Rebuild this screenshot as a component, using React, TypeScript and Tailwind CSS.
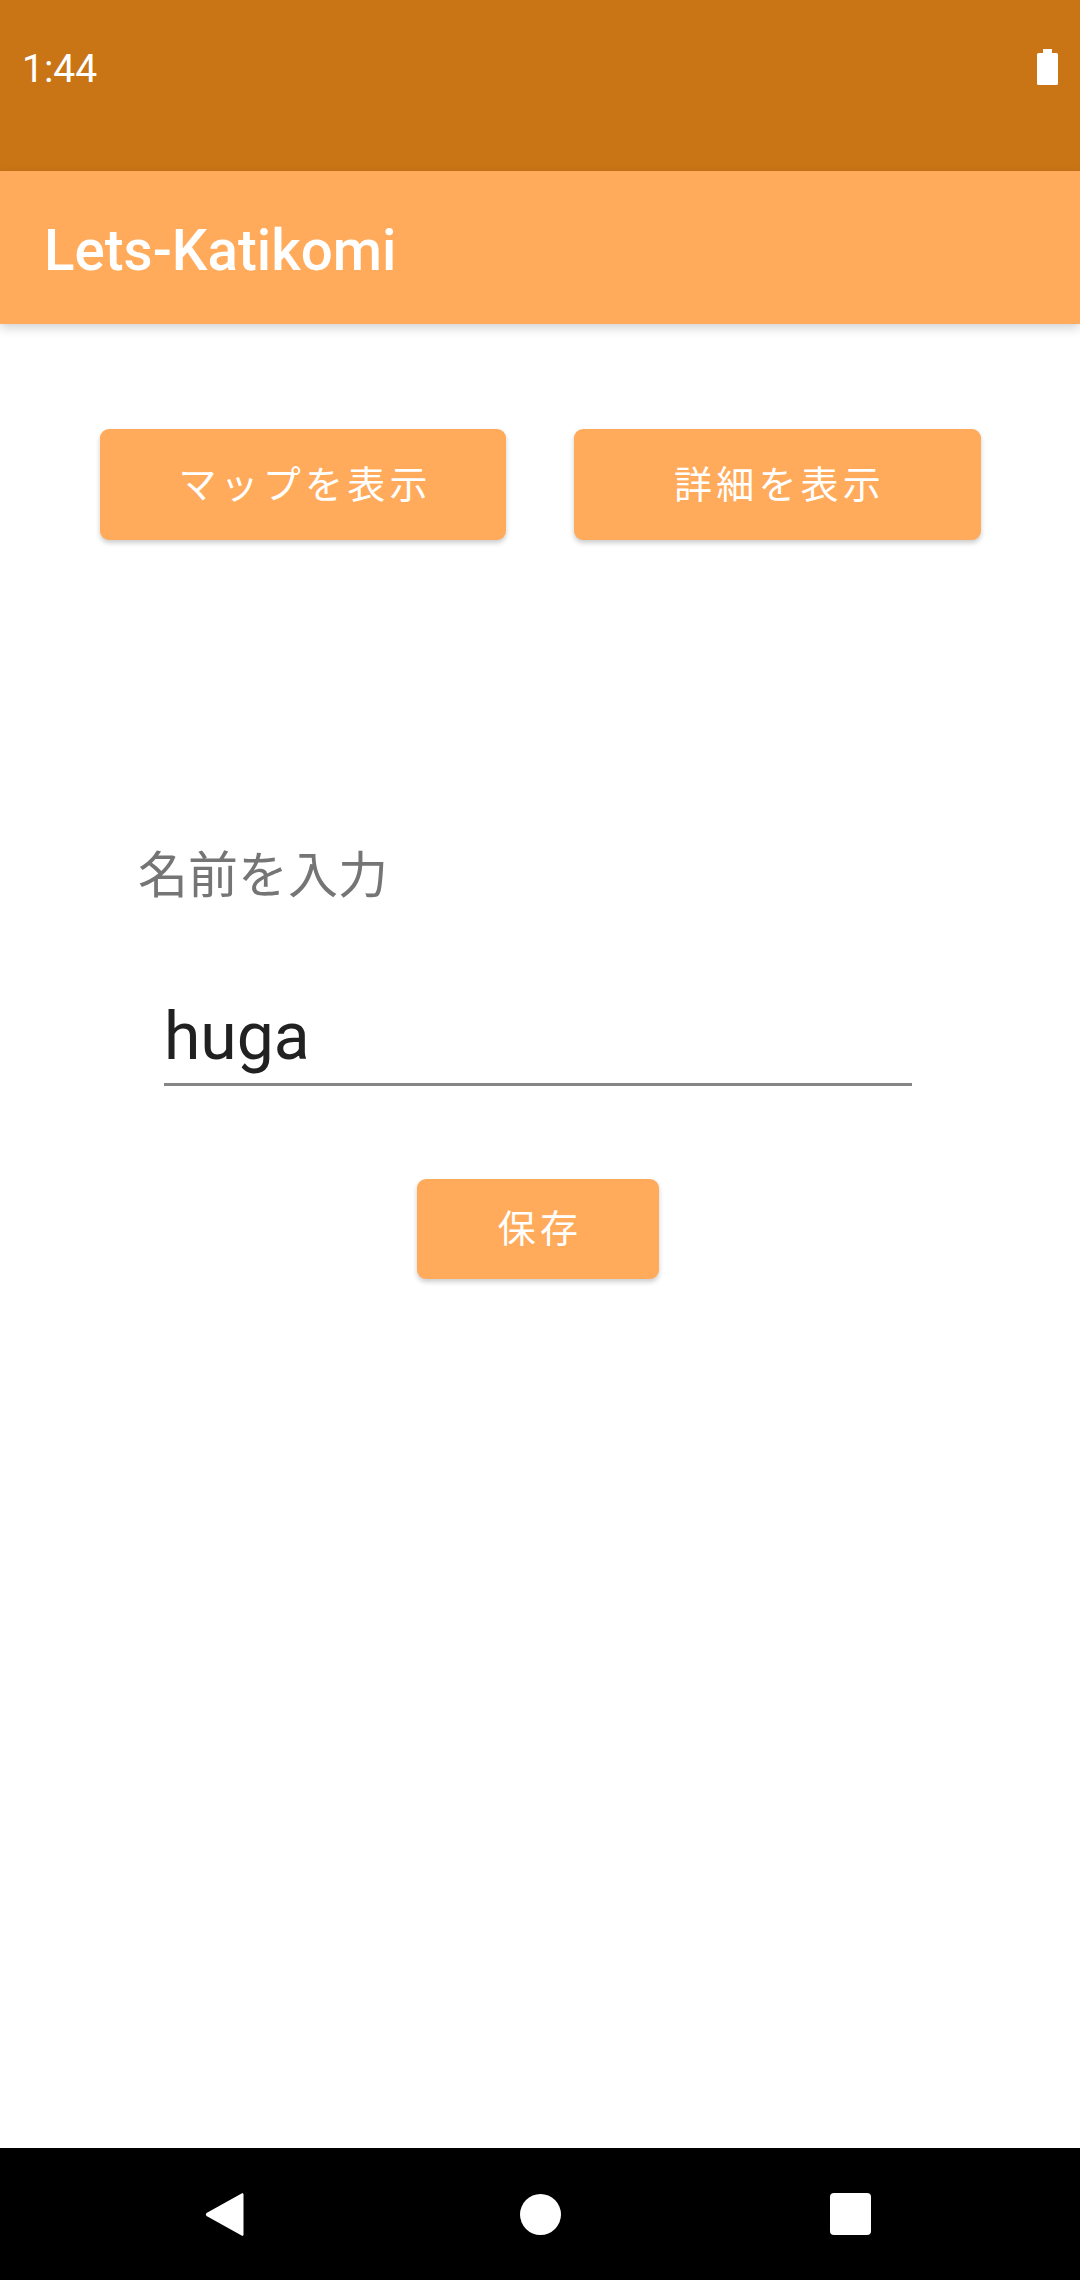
import React from 'react'

const jp = { fontFamily: 'Roboto, "Noto Sans CJK JP", sans-serif' }

const StatusBar: React.FC = () => (
  <div className="flex h-[171px] shrink-0 items-start justify-between bg-[#c97516] text-white">
    <span className="ml-[22px] mt-[50px] text-[39px] leading-[39px]">1:44</span>
    {/* battery */}
    <svg className="mr-[22px] mt-[49px]" width="21" height="36" viewBox="0 0 21 36">
      <rect x="6" y="0" width="9" height="5" fill="#fff" />
      <rect x="0" y="4" width="21" height="32" rx="1.5" fill="#fff" />
    </svg>
  </div>
)

const AppBar: React.FC = () => (
  <div className="relative z-10 flex h-[153px] shrink-0 items-center bg-[#ffab5b] pl-[44px] pt-[7px] shadow-[0_4px_10px_rgba(0,0,0,0.18)]">
    <h1 className="text-[56.5px] font-medium leading-[56px] text-white">Lets-Katikomi</h1>
  </div>
)

// trailing tracking pushes glyphs left, pl-[4px] evens it out
const OrangeButton: React.FC<{ label: string; className?: string }> = ({ label, className }) => (
  <button
    className={`flex items-center justify-center rounded-[9px] bg-[#ffab5b] pl-[4px] text-[38px] leading-[38px] tracking-[4.2px] text-white shadow-[0_3px_5px_rgba(0,0,0,0.2)] ${className ?? ''}`}
    style={jp}
    type="button"
  >
    {label}
  </button>
)

const NavBar: React.FC = () => (
  <div className="flex h-[132px] shrink-0 items-center bg-black">
    <div className="flex w-full items-center justify-between pl-[205px] pr-[209px]">
      <svg width="40" height="45" viewBox="0 0 40 45">
        <path d="M37.5 1 L38.5 2 L38.5 43 L37.5 44 L1.5 24 Q0 22.5 1.5 21 Z" fill="#fff" />
      </svg>
      <div className="ml-[6px] h-[41px] w-[41px] rounded-full bg-white" />
      <div className="h-[42px] w-[41px] rounded-[4px] bg-white" />
    </div>
  </div>
)

export default function App() {
  return (
    <div className="flex h-[2280px] w-[1080px] flex-col overflow-hidden bg-white" style={{ fontFamily: 'Roboto, "Noto Sans CJK JP", sans-serif' }}>
      <StatusBar />
      <AppBar />

      <main className="flex flex-1 flex-col">
        {/* top actions */}
        <div className="mt-[105px] flex justify-center gap-[68px] pl-[1px]">
          <OrangeButton className="h-[111px] w-[406px]" label="マップを表示" />
          <OrangeButton className="h-[111px] w-[407px]" label="詳細を表示" />
        </div>

        {/* name form */}
        <p className="ml-[138px] mt-[311px] text-[50px] leading-[50px] text-[#757575]" style={jp}>
          名前を入力
        </p>

        <div className="ml-[164px] mt-[103px] w-[748px]">
          <div className="text-[66px] leading-[66px] text-[#212121]">huga</div>
          <div className="mt-[13px] h-[3px] bg-[#858585]" />
        </div>

        <div className="mt-[93px] flex justify-center">
          <OrangeButton className="ml-[-4px] h-[100px] w-[242px]" label="保存" />
        </div>
      </main>

      <NavBar />
    </div>
  )
}
